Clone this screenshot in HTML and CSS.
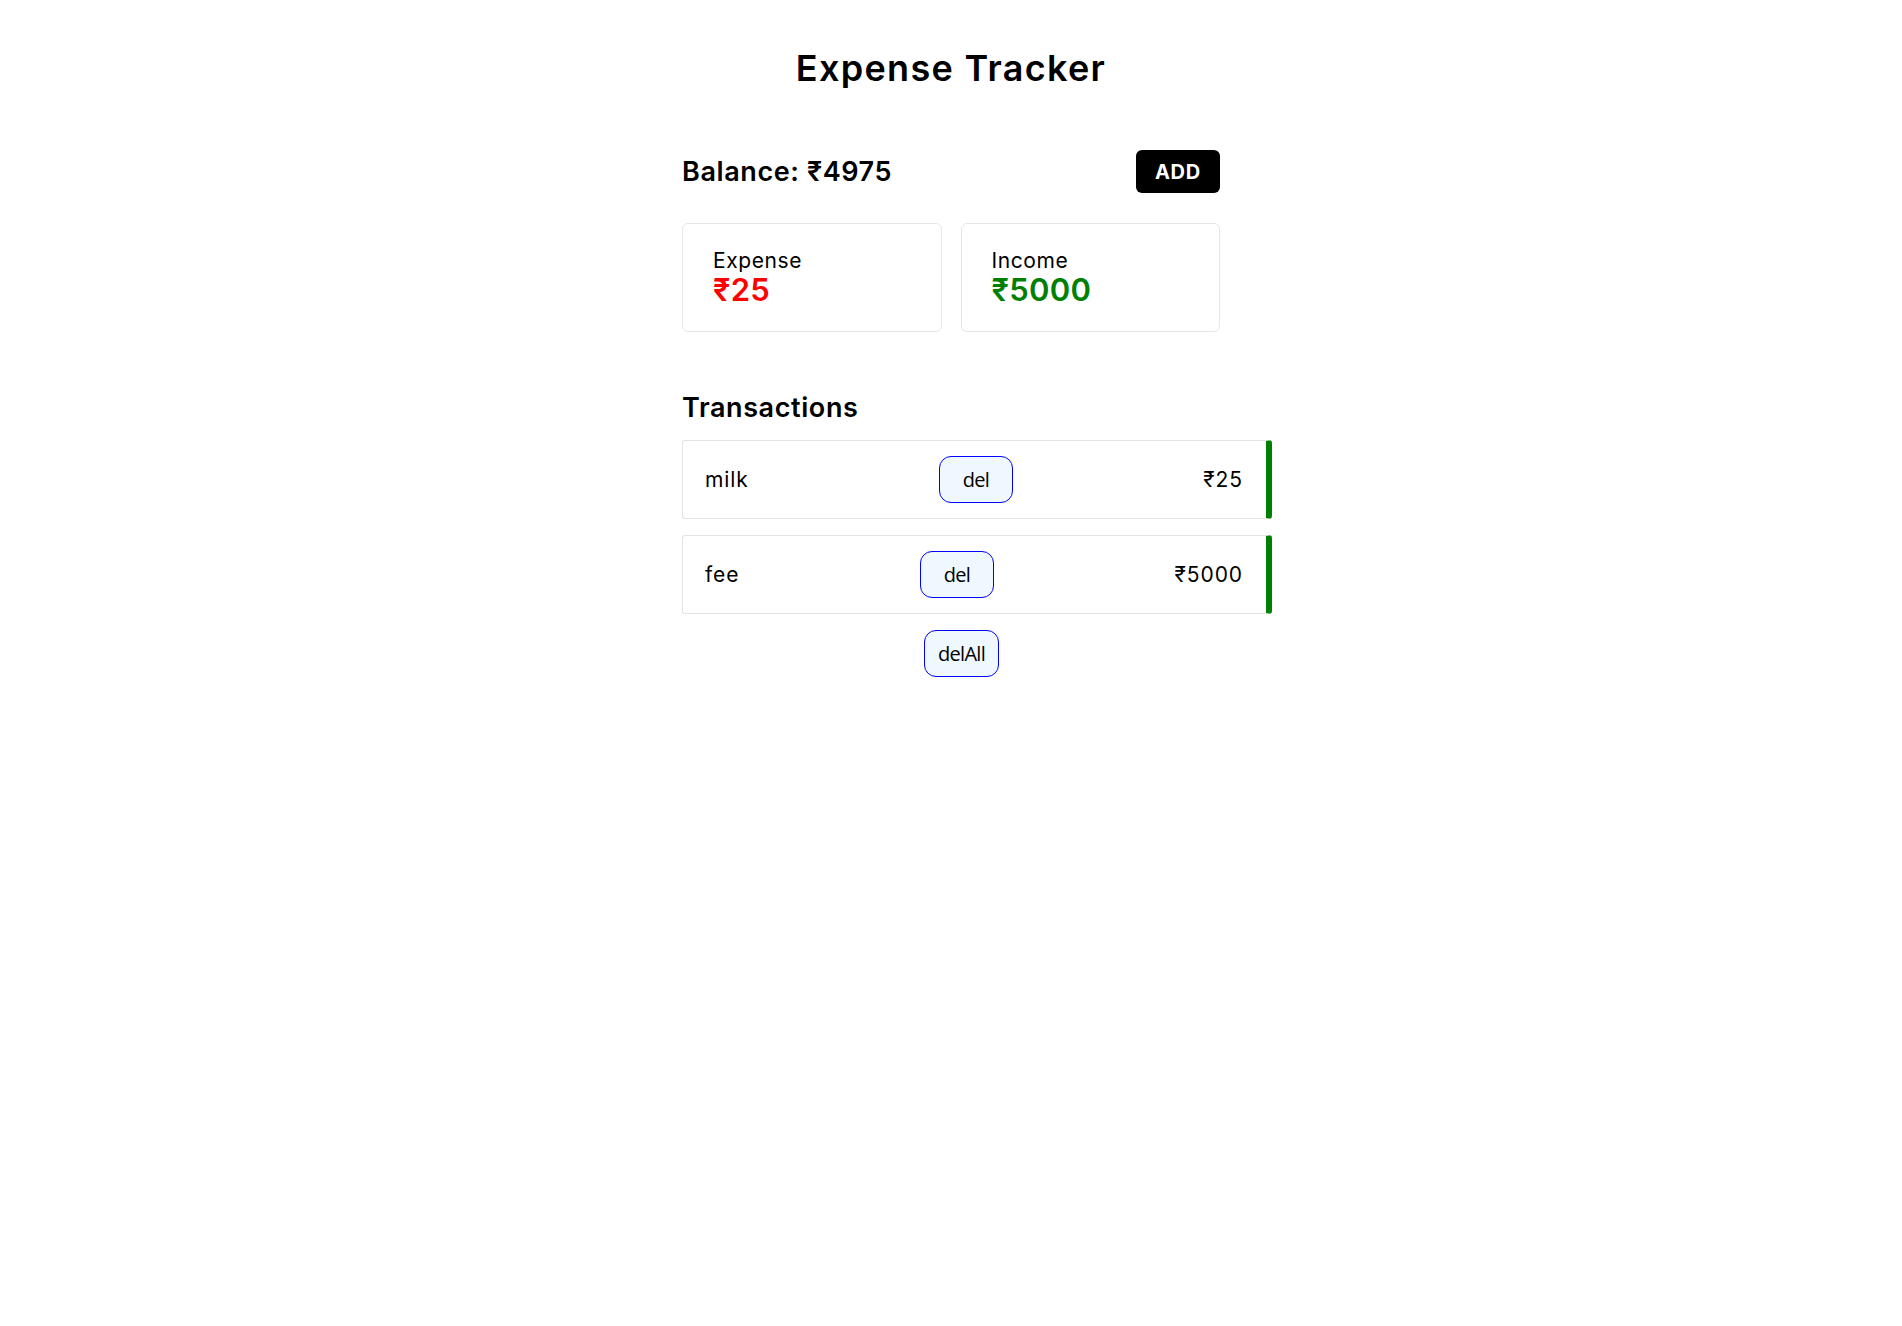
FILE: index.html
```html
<!DOCTYPE html>
<html lang="en">
<head>
<meta charset="utf-8">
<title>Expense Tracker</title>
<link rel="stylesheet" href="styles.css">
</head>
<body>
<div class="app">
  <h1 class="title">Expense Tracker</h1>
  <div class="balance-row">
    <h2 class="balance">Balance: ₹4975</h2>
    <button class="add-btn">ADD</button>
  </div>
  <div class="cards">
    <div class="card">
      <div class="card-label">Expense</div>
      <div class="card-value expense">₹25</div>
    </div>
    <div class="card">
      <div class="card-label">Income</div>
      <div class="card-value income">₹5000</div>
    </div>
  </div>
  <h2 class="section-title">Transactions</h2>
  <div class="list">
    <div class="txn">
      <span class="txn-name">milk</span>
      <button class="del-btn">del</button>
      <span class="txn-amount">₹25</span>
    </div>
    <div class="txn">
      <span class="txn-name">fee</span>
      <button class="del-btn">del</button>
      <span class="txn-amount">₹5000</span>
    </div>
  </div>
  <div class="delall-wrap">
    <button class="del-btn delall">delAll</button>
  </div>
</div>
</body>
</html>
```

FILE: styles.css
```css
* { box-sizing: border-box; }
body {
  margin: 0;
  background: #fff;
  color: #000;
  font-family: Inter, "Noto Sans", "DejaVu Sans", sans-serif;
}
.app {
  width: 538px;
  margin: 0 auto;
}
.title {
  margin: 47px 0 0;
  font-size: 36px;
  line-height: 42px;
  font-weight: 600;
  text-align: center;
  letter-spacing: 1.3px;
}
.balance-row {
  margin-top: 61px;
  display: flex;
  justify-content: space-between;
  align-items: center;
}
.balance {
  margin: 0;
  font-size: 27px;
  font-weight: 600;
  line-height: 32px;
  letter-spacing: 0.6px;
}
.add-btn {
  height: 43px;
  width: 84px;
  padding: 0;
  border: none;
  border-radius: 6px;
  background: #000;
  color: #fff;
  font-family: inherit;
  font-size: 20px;
  font-weight: 700;
  letter-spacing: 0.8px;
}
.cards {
  margin-top: 30px;
  display: grid;
  grid-template-columns: 1fr 1fr;
  gap: 19px;
}
.card {
  height: 109px;
  border: 1px solid #e6e6e6;
  border-radius: 6px;
  padding: 24px 30px;
}
.card-label {
  font-size: 21px;
  line-height: 26px;
  letter-spacing: 0.6px;
}
.card-value {
  font-size: 31px;
  line-height: 32px;
  font-weight: 600;
  letter-spacing: 0.3px;
}
.expense { color: #ff0000; }
.income { color: #008000; }
.section-title {
  margin: 60px 0 0;
  font-size: 27px;
  font-weight: 600;
  line-height: 32px;
  letter-spacing: 0.6px;
}
.list {
  margin-top: 16px;
  display: flex;
  flex-direction: column;
  gap: 16px;
}
.txn {
  box-sizing: content-box;
  width: 100%;
  display: flex;
  justify-content: space-between;
  align-items: center;
  padding: 15px 23px 15px 22px;
  border: 1px solid #e3e3e3;
  border-right: 6px solid #008000;
  border-radius: 3px;
  font-size: 21px;
  letter-spacing: 0.9px;
}
.del-btn {
  height: 47px;
  width: 74px;
  padding: 0;
  border: 1px solid #0000ff;
  border-radius: 12px;
  background: #f0f8ff;
  color: #000;
  font-family: "Open Sans", "Noto Sans", sans-serif;
  font-size: 20px;
  letter-spacing: -0.7px;
}
.delall-wrap {
  margin-top: 16px;
  display: flex;
  justify-content: center;
}
.delall {
  width: 75px;
  margin-left: 21px;
}
```
